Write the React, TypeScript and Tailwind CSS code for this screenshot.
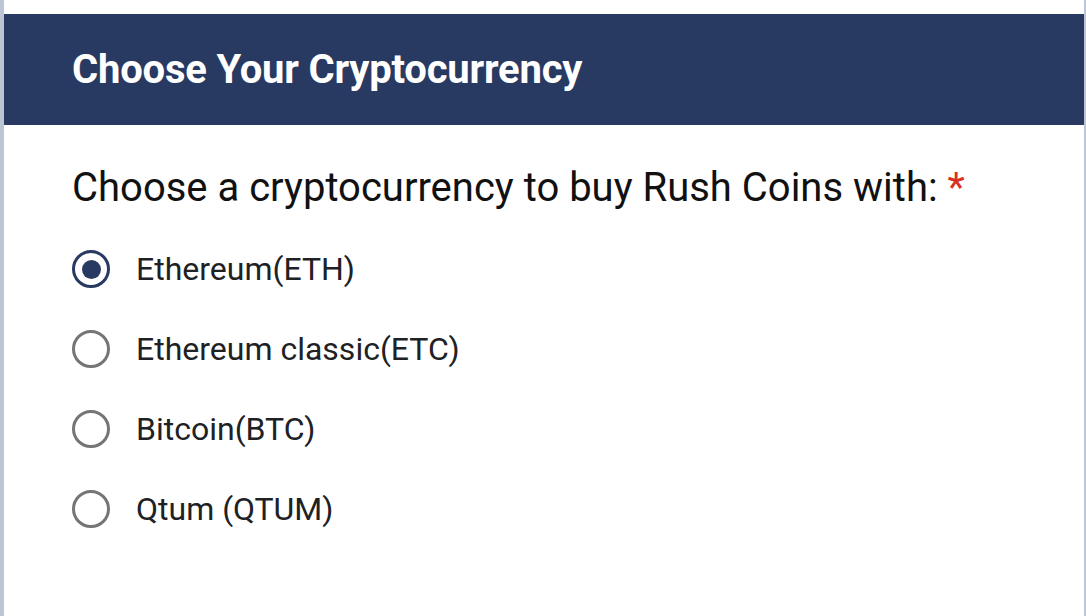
import { useState } from "react";

const options = [
  "Ethereum(ETH)",
  "Ethereum classic(ETC)",
  "Bitcoin(BTC)",
  "Qtum (QTUM)",
];

export default function App() {
  const [selected, setSelected] = useState(0);

  return (
    <div className="flex h-[616px] w-[1086px] bg-white font-['Roboto',sans-serif]">
      <div className="w-[4px] bg-[#bcc5d4]" />
      <div className="flex flex-1 flex-col pt-[14px]">
        {/* header */}
        <div className="flex h-[111px] items-center bg-[#293a62] pl-[68px]">
          <h1 className="text-[40px] leading-none font-bold tracking-[-0.2px] text-white">
            Choose Your Cryptocurrency
          </h1>
        </div>

        <div className="pl-[68px] pt-[43px]">
          <p className="text-[40px] leading-none text-[#111]">
            Choose a cryptocurrency to buy Rush Coins with:{" "}
            <span className="text-[#d93025]">*</span>
          </p>

          <div className="mt-[21px] flex flex-col">
            {options.map((opt, i) => (
              <label
                key={opt}
                className="flex h-[80px] cursor-pointer items-center gap-[26px]"
                onClick={() => setSelected(i)}
              >
                {selected === i ? (
                  <span className="flex h-[38px] w-[38px] items-center justify-center rounded-full border-[3px] border-[#293a62]">
                    <span className="h-[19px] w-[19px] rounded-full bg-[#293a62]" />
                  </span>
                ) : (
                  <span className="h-[38px] w-[38px] rounded-full border-[3px] border-[#757575]" />
                )}
                <span className="text-[32px] leading-none text-[#202124]">{opt}</span>
              </label>
            ))}
          </div>
        </div>
      </div>
      <div className="w-[2px] bg-[#bcc5d4]" />
    </div>
  );
}
